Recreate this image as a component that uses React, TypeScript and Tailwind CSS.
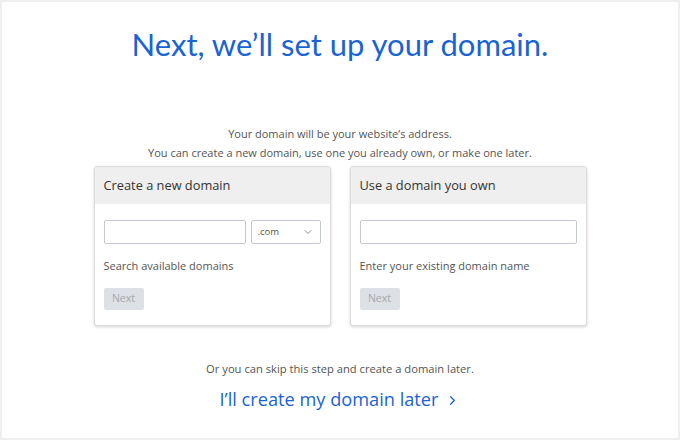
import { ChevronDown, ChevronRight } from 'lucide-react';

function Card({ title, hint, withSelect }: { title: string; hint: string; withSelect?: boolean }) {
  return (
    <div className="w-[237px] h-[160px] rounded-[3px] border border-[#dcdcdc] bg-white shadow-[0_1px_3px_rgba(0,0,0,0.18)] overflow-hidden">
      <div className="h-[37px] bg-[#efefef] px-[9px] flex items-center text-[12.8px] text-[#333]">{title}</div>
      <div className="px-[9px] pt-[16px]">
        <div className="flex gap-[5px]">
          <div className="h-[24px] flex-1 rounded-[2px] border border-[#c4c8cf] bg-white" />
          {withSelect && (
            <div className="h-[24px] w-[70px] rounded-[2px] border border-[#c4c8cf] bg-white flex items-center justify-between pl-[6px] pr-[6px] text-[9.5px] text-[#555]">
              <span>.com</span>
              <ChevronDown size={12} strokeWidth={1.5} className="text-[#666]" />
            </div>
          )}
        </div>
        <div className="mt-[14px] text-[11px] leading-[16px] text-[#555]">{hint}</div>
        <div className="mt-[14px] w-[40px] h-[22px] rounded-[2px] bg-[#dde0e5] text-[#a2a7ae] text-[10.5px] flex items-center justify-center">
          Next
        </div>
      </div>
    </div>
  );
}

export default function App() {
  return (
    <div className="w-[680px] h-[440px] bg-[#efefef] p-[2px] font-['Open_Sans',sans-serif]">
      <div className="h-full bg-white flex flex-col items-center">
        <h1 className="mt-[22px] text-[31px] leading-[40px] text-[#1a63d3] font-['Lato',sans-serif] font-normal">
          Next, we’ll set up your domain.
        </h1>
        <div className="mt-[60px] text-center text-[11px] leading-[19px] text-[#555]">
          <p>Your domain will be your website’s address.</p>
          <p>You can create a new domain, use one you already own, or make one later.</p>
        </div>
        <div className="mt-[4px] flex gap-[19px]">
          <Card title="Create a new domain" hint="Search available domains" withSelect />
          <Card title="Use a domain you own" hint="Enter your existing domain name" />
        </div>
        <p className="mt-[34px] text-[11.2px] leading-[17px] text-[#555]">Or you can skip this step and create a domain later.</p>
        <div className="mt-[10px] h-[26px] flex items-center gap-[7px] text-[18.2px] text-[#1a63d3]">
          <span>I’ll create my domain later</span>
          <ChevronRight size={15} strokeWidth={2} />
        </div>
      </div>
    </div>
  );
}
